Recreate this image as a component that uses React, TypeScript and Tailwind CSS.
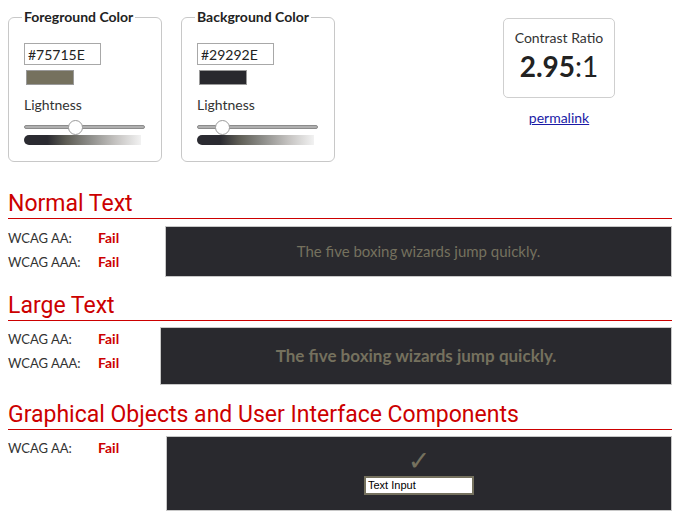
import React from "react";

const body = { fontFamily: "Lato, 'Open Sans', sans-serif" };
const heading = { fontFamily: "Roboto, 'Liberation Sans', sans-serif" };

function ColorPicker({
  title,
  hex,
  thumb,
}: {
  title: string;
  hex: string;
  thumb: number;
}) {
  return (
    <fieldset className="w-[154px] h-[155px] border border-[#c8c8c8] rounded-[6px] pl-[13px] pr-[14px]">
      <legend className="px-[2px] text-[14px] leading-[20px] font-bold text-[#222]">
        {title}
      </legend>
      <div className="pl-[2px]">
        <input
          readOnly
          value={hex}
          className="mt-[16px] block w-[77px] h-[22px] border border-[#a8a8a8] px-[3px] text-[14px] text-[#222] outline-none"
          style={body}
        />
        <div
          className="mt-[5px] ml-[2px] w-[48px] h-[15px] border border-[#9a9a9a]"
          style={{ background: hex }}
        />
        <div className="mt-[10px] text-[14px] leading-[20px] text-[#333]">
          Lightness
        </div>
        <div className="relative mt-[7px] h-[10px] w-[121px]">
          <div className="absolute left-0 right-0 top-[3px] h-[4px] rounded-full bg-[#b0b0b0] border border-[#8c8c8c]" />
          <div
            className="absolute top-[-2px] w-[15px] h-[15px] rounded-full bg-white border border-[#9a9a9a]"
            style={{ left: thumb - 7 }}
          />
        </div>
        <div className="mt-[3px] h-[10px] w-[117px] rounded-l-[5px] bg-[linear-gradient(to_right,#2b2b31_0%,#2b2b31_20%,#5e5d55_36%,#8a8a86_55%,#c4c2c0_78%,#f2f2f2_100%)]" />
      </div>
    </fieldset>
  );
}

function Results({ rows, width }: { rows: string[]; width: string }) {
  return (
    <div className={`${width} shrink-0`}>
      {rows.map((r) => (
        <div key={r} className="flex items-baseline leading-[23px]">
          <span className="w-[90px] text-[13px] text-[#333]">{r}</span>
          <span className="text-[14px] font-bold text-[#cc0000]">Fail</span>
        </div>
      ))}
    </div>
  );
}

export default function App() {
  return (
    <div className="w-[682px] h-[521px] bg-white overflow-hidden pl-[8px] pr-[10px]" style={body}>
      {/* Top row */}
      <div className="flex items-start pt-[7px]">
        <ColorPicker title="Foreground Color" hex="#75715E" thumb={51} />
        <div className="ml-[19px]">
          <ColorPicker title="Background Color" hex="#29292E" thumb={25} />
        </div>
        <div className="ml-[168px] mt-[11px] flex flex-col items-center w-[112px]">
          <div className="w-[112px] h-[80px] border border-[#cfcfcf] rounded-[5px] flex flex-col items-center pt-[9px]">
            <div className="text-[14px] leading-[20px] text-[#333]">Contrast Ratio</div>
            <div className="text-[28px] leading-[34px] text-[#222] mt-[1px]">
              <span className="font-bold">2.95</span>:1
            </div>
          </div>
          <a className="mt-[10px] text-[14px] leading-[20px] text-[#1a1aa6] underline" href="#">
            permalink
          </a>
        </div>
      </div>

      {/* Normal Text */}
      <h2
        className="mt-[29px] text-[23px] leading-[26px] pb-[1px] border-b border-[#cc0000] text-[#cc0000]"
        style={heading}
      >
        Normal Text
      </h2>
      <div className="flex mt-[7px]">
        <Results rows={["WCAG AA:", "WCAG AAA:"]} width="w-[157px]" />
        <div className="flex-1 h-[51px] bg-[#29292E] border border-[#c8c8c8] flex items-center justify-center text-[15px] text-[#75715E]">
          The five boxing wizards jump quickly.
        </div>
      </div>

      {/* Large Text */}
      <h2
        className="mt-[16px] text-[23px] leading-[26px] pb-[1px] border-b border-[#cc0000] text-[#cc0000]"
        style={heading}
      >
        Large Text
      </h2>
      <div className="flex mt-[6px]">
        <Results rows={["WCAG AA:", "WCAG AAA:"]} width="w-[152px]" />
        <div className="flex-1 h-[58px] bg-[#29292E] border border-[#c8c8c8] flex items-center justify-center text-[17px] font-bold text-[#75715E]">
          The five boxing wizards jump quickly.
        </div>
      </div>

      {/* Graphical Objects */}
      <h2
        className="mt-[17px] text-[23px] leading-[26px] pb-[1px] border-b border-[#cc0000] text-[#cc0000]"
        style={heading}
      >
        Graphical Objects and User Interface Components
      </h2>
      <div className="flex mt-[6px]">
        <Results rows={["WCAG AA:"]} width="w-[158px]" />
        <div className="flex-1 h-[75px] bg-[#29292E] border border-[#c8c8c8] flex flex-col items-center pt-[11px]">
          <span className="text-[27px] leading-[26px] text-[#75715E]" style={{ fontFamily: "'DejaVu Sans', sans-serif" }}>
            ✓
          </span>
          <div
            className="mt-[2px] w-[110px] h-[19px] bg-white border-2 border-[#75715E] px-[2px] text-[11px] leading-[15px] text-black"
            style={{ fontFamily: "'Liberation Sans', Arial, sans-serif" }}
          >
            Text Input
          </div>
        </div>
      </div>
    </div>
  );
}
